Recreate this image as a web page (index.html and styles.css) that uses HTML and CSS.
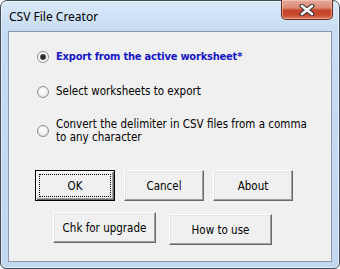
FILE: index.html
```html
<!DOCTYPE html>
<html lang="en">
<head>
    <meta charset="UTF-8" />
    <meta name="viewport" content="width=device-width, initial-scale=1.0"/>
    <title>CSV File Creator</title>
    <link rel="stylesheet" href="styles.css">
</head>
<body>
    <div class="window">
        <div class="titlebar">
            <span class="title">CSV File Creator</span>
            <div class="close-btn">
                <svg width="16" height="12" viewBox="0 0 16 12">
                    <path d="M3 2 L13 10 M13 2 L3 10" stroke="#3a3230" stroke-width="4.8" stroke-linecap="round"/>
                    <path d="M3 2 L13 10 M13 2 L3 10" stroke="#ffffff" stroke-width="2.6" stroke-linecap="round"/>
                </svg>
            </div>
        </div>
        <div class="client">
            <div class="options">
                <label class="option selected">
                    <span class="radio"></span>
                    <span class="option-text strong">Export from the active worksheet*</span>
                </label>
                <label class="option">
                    <span class="radio"></span>
                    <span class="option-text">Select worksheets to export</span>
                </label>
                <label class="option two-line">
                    <span class="radio"></span>
                    <span class="option-text">Convert the delimiter in CSV files from a comma to any character</span>
                </label>
            </div>
            <div class="button-row main-row">
                <button class="btn default"><span>OK</span></button>
                <button class="btn"><span>Cancel</span></button>
                <button class="btn"><span>About</span></button>
            </div>
            <div class="button-row extra-row">
                <button class="btn wide"><span>Chk for upgrade</span></button>
                <button class="btn wide lower"><span>How to use</span></button>
            </div>
        </div>
    </div>
</body>
</html>
```
FILE: styles.css
```css
body {
    margin: 0;
    background-color: #ffffff;
}
.window {
    box-sizing: border-box;
    width: 340px;
    height: 269px;
    border: 1px solid #434d59;
    border-radius: 7px 7px 6px 6px;
    padding: 0 7px 6px 7px;
    background: linear-gradient(to bottom, #dae9f8 0, #cfe2f6 16px, #c6dcf3 30px, #c1d8f0 100%);
    box-shadow: inset 0 0 0 1px rgba(255, 255, 255, 0.55);
    display: flex;
    flex-direction: column;
}
.titlebar {
    height: 30px;
    display: flex;
    align-items: center;
    justify-content: space-between;
}
.title {
    font-family: "Noto Sans", "DejaVu Sans", sans-serif;
    font-size: 12px;
    color: #000;
    padding-left: 1px;
}
.close-btn {
    align-self: flex-start;
    width: 50px;
    height: 19px;
    margin-top: -1px;
    margin-right: -1px;
    border: 1px solid #6b2a20;
    border-top: none;
    border-radius: 0 0 5px 5px;
    background: linear-gradient(to bottom, #e9ab9c 0, #dc8a76 40%, #c5442b 55%, #c94a30 80%, #d97a5e 100%);
    box-shadow: inset 0 0 0 1px rgba(255, 220, 210, 0.45);
    display: flex;
    align-items: center;
    justify-content: center;
}
.client {
    flex: 1;
    border: 1px solid #8b9aab;
    background-color: #f0f0f0;
    font-family: "DejaVu Sans Condensed", "DejaVu Sans", sans-serif;
    font-size: 11.5px;
    color: #000;
}
.options {
    display: flex;
    flex-direction: column;
    padding: 18px 0 0 28px;
}
.option {
    display: flex;
    align-items: center;
    gap: 7px;
    line-height: 13px;
}
.option + .option {
    margin-top: 22px;
}
.option.two-line {
    margin-top: 20px;
}
.option-text {
    max-width: 255px;
}
.option-text.strong {
    font-size: 11px;
    font-weight: bold;
    letter-spacing: -0.2px;
    color: #1616c8;
}
.radio {
    flex: none;
    box-sizing: border-box;
    width: 12px;
    height: 12px;
    border: 1px solid #8e8f8f;
    border-radius: 50%;
    background: radial-gradient(circle at 45% 40%, #ffffff 0, #f4f4f4 40%, #d4d4d4 100%);
}
.option.selected .radio {
    background: radial-gradient(circle at 50% 50%, #1a1a1a 0, #333 2px, #6f6f6f 2.8px, #fdfdfd 3.6px, #e8e8e8 100%);
}
.button-row {
    display: flex;
    align-items: flex-start;
}
.main-row {
    margin-top: 26px;
    padding-left: 26px;
    gap: 9px;
}
.extra-row {
    margin-top: 11px;
    padding-left: 44px;
    gap: 13px;
}
.btn {
    box-sizing: border-box;
    width: 80px;
    height: 31px;
    padding: 0;
    margin: 0;
    font-family: inherit;
    font-size: 11.5px;
    color: #000;
    background-color: #f0f0f0;
    border: 1px solid;
    border-color: #ffffff #696969 #696969 #ffffff;
    box-shadow: inset -1px -1px 0 #a0a0a0, inset 1px 1px 0 #e3e3e3;
    display: flex;
}
.btn span {
    flex: 1;
    display: flex;
    align-items: center;
    justify-content: center;
    margin: 3px;
    border: 1px solid transparent;
}
.btn.default {
    border-color: #000;
    box-shadow: inset 1px 1px 0 #ffffff, inset -1px -1px 0 #696969, inset -2px -2px 0 #a0a0a0;
}
.btn.default span {
    border: 1px dotted #000;
}
.btn.wide {
    width: 103px;
    height: 31px;
}
.btn.lower {
    margin-top: 2px;
}
```
